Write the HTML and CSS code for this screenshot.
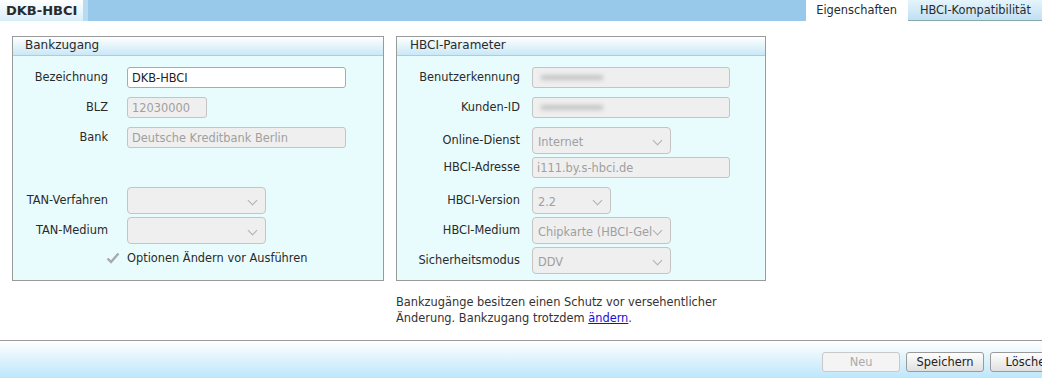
FILE: index.html
```html
<!DOCTYPE html>
<html lang="de">
  <head>
    <meta charset="UTF-8" />
    <title>DKB-HBCI</title>
    <link rel="stylesheet" href="styles.css">
  </head>
  <body>
    <div id="topbar">
      <div class="title-tab">DKB-HBCI</div>
      <div class="spacer"></div>
      <div class="tab active">Eigenschaften</div>
      <div class="tab">HBCI-Kompatibilität</div>
    </div>

    <div id="content">
      <div class="panels">
        <div class="box box-left">
          <div class="box-head">Bankzugang</div>
          <div class="box-body form form-left">
            <label>Bezeichnung</label>
            <div class="field"><input class="inp wide" value="DKB-HBCI"></div>
            <label>BLZ</label>
            <div class="field"><input class="inp short" value="12030000" disabled></div>
            <label>Bank</label>
            <div class="field"><input class="inp wide" value="Deutsche Kreditbank Berlin" disabled></div>
            <div class="gap"></div>
            <label class="tall">TAN-Verfahren</label>
            <div class="field"><div class="sel mid"><span></span><i class="chev"></i></div></div>
            <label class="tall">TAN-Medium</label>
            <div class="field"><div class="sel mid"><span></span><i class="chev"></i></div></div>
            <div class="check">
              <svg width="14" height="12" viewBox="0 0 14 12"><path d="M1.5 6.5 L5 10 L12.5 1.5" fill="none" stroke="#a9a9a9" stroke-width="2.4"/></svg>
              <span>Optionen Ändern vor Ausführen</span>
            </div>
          </div>
        </div>

        <div class="side">
          <div class="box box-right">
            <div class="box-head">HBCI-Parameter</div>
            <div class="box-body form form-right">
              <label>Benutzerkennung</label>
              <div class="field"><div class="inp wide fake"><span class="blur"></span></div></div>
              <label>Kunden-ID</label>
              <div class="field"><div class="inp wide fake"><span class="blur"></span></div></div>
              <label class="tall">Online-Dienst</label>
              <div class="field"><div class="sel mid"><span>Internet</span><i class="chev"></i></div></div>
              <label>HBCI-Adresse</label>
              <div class="field"><input class="inp wide" value="i111.by.s-hbci.de" disabled></div>
              <label class="tall">HBCI-Version</label>
              <div class="field"><div class="sel small"><span>2.2</span><i class="chev"></i></div></div>
              <label class="tall">HBCI-Medium</label>
              <div class="field"><div class="sel mid"><span>Chipkarte (HBCI-Gel</span><i class="chev"></i></div></div>
              <label class="tall">Sicherheitsmodus</label>
              <div class="field"><div class="sel mid"><span>DDV</span><i class="chev"></i></div></div>
            </div>
          </div>
          <p class="note">Bankzugänge besitzen einen Schutz vor versehentlicher<br>Änderung. Bankzugang trotzdem <a href="#">ändern</a>.</p>
        </div>
      </div>
    </div>

    <div id="footer">
      <button disabled>Neu</button>
      <button>Speichern</button>
      <button>Löschen</button>
    </div>
  </body>
</html>
```

FILE: styles.css
```css
body {
  margin: 0;
  width: 1042px;
  height: 378px;
  overflow: hidden;
  font-family: "DejaVu Sans", Verdana, sans-serif;
  font-size: 11.4px;
  color: #2a2a2a;
  background: #fff;
  display: flex;
  flex-direction: column;
}
#topbar {
  display: flex;
  height: 21px;
  background: #98c8ea;
}
.title-tab {
  width: 77px;
  padding-left: 6px;
  padding-top: 3px;
  font-weight: bold;
  font-size: 13px;
  background: linear-gradient(#ffffff, #d8eef9);
  border-right: 5px solid #b8dbf2;
}
.spacer {
  flex: 1;
}
.tab {
  padding: 3px 11px 0 12px;
  background: linear-gradient(#e6f4fb, #bfe0f3);
  border-bottom: 1px solid #8aa;
  box-sizing: border-box;
}
.tab.active {
  background: #fff;
  border-bottom: none;
  padding-left: 10px;
  padding-right: 11px;
}
#content {
  flex: 1;
  padding: 15px 0 0 12px;
}
.panels {
  display: flex;
  gap: 12px;
  align-items: flex-start;
}
.box {
  border: 1px solid #9a9a9a;
  background: #e8fcfd;
}
.box-left {
  width: 370px;
  height: 243px;
}
.box-right {
  width: 368px;
  height: 243px;
}
.box-head {
  height: 18px;
  line-height: 17px;
  padding-left: 12px;
  border-bottom: 1px solid #b9c9cf;
  background: linear-gradient(#ffffff, #c9e8f6);
  font-size: 12px;
}
.box-right .box-head {
  padding-left: 13px;
}
.form {
  display: grid;
  grid-auto-rows: 30px;
  align-items: start;
  padding-top: 11px;
}
.form-left {
  grid-template-columns: 95px auto;
  column-gap: 19px;
}
.form-right {
  grid-template-columns: 123px auto;
  column-gap: 12px;
}
label {
  text-align: right;
  line-height: 21px;
}
label.tall {
  line-height: 27px;
}
.gap {
  grid-column: 1 / 3;
}
.field {
  display: flex;
}
.inp {
  box-sizing: border-box;
  height: 21px;
  margin: 0;
  padding: 0 4px;
  font: inherit;
  border: 1px solid #aaa;
  border-radius: 3px;
  background: #fff;
  color: #222;
}
.inp:disabled, .inp.fake {
  background: #efefef;
  color: #a0a0a0;
  border-color: #c4c4c4;
}
.inp.wide {
  width: 219px;
}
.form-right .inp.wide {
  width: 198px;
}
.inp.short {
  width: 80px;
}
.fake {
  display: flex;
  align-items: center;
}
.blur {
  display: block;
  width: 62px;
  height: 5px;
  margin-left: 4px;
  background: #c4c4c4;
  filter: blur(2px);
}
.sel {
  box-sizing: border-box;
  height: 27px;
  display: flex;
  align-items: center;
  justify-content: space-between;
  padding: 2px 7px 0 5px;
  border: 1px solid #c4c4c4;
  border-radius: 4px;
  background: #efefef;
  color: #a0a0a0;
  white-space: nowrap;
  overflow: hidden;
}
.sel.mid {
  width: 139px;
}
.sel.small {
  width: 79px;
}
.chev {
  width: 6px;
  height: 6px;
  border-right: 1.3px solid #b0b0b0;
  border-bottom: 1.3px solid #b0b0b0;
  transform: rotate(45deg);
  margin: -3px 2px 0 0;
  flex: none;
}
.check {
  grid-column: 1 / 3;
  display: flex;
  align-items: center;
  gap: 7px;
  height: 21px;
  padding-left: 93px;
}
.note {
  margin: 13px 0 0 0;
  line-height: 16px;
  color: #333;
}
.note a {
  color: #1a0dd8;
}
#footer {
  height: 38px;
  border-top: 1px solid #999;
  background: linear-gradient(#ffffff, #bde6fb);
  display: flex;
  justify-content: flex-end;
  align-items: flex-start;
  gap: 6px;
  padding-top: 11px;
  box-sizing: border-box;
  margin-right: -26px;
}
#footer button {
  width: 78px;
  height: 20px;
  font: inherit;
  color: #222;
  border: 1px solid #9a9a9a;
  border-radius: 3px;
  background: linear-gradient(#fefefe, #e0e0e0);
  padding: 0;
}
#footer button:disabled {
  color: #aaa;
  border-color: #c8c8c8;
  background: #f4f4f4;
}
```
